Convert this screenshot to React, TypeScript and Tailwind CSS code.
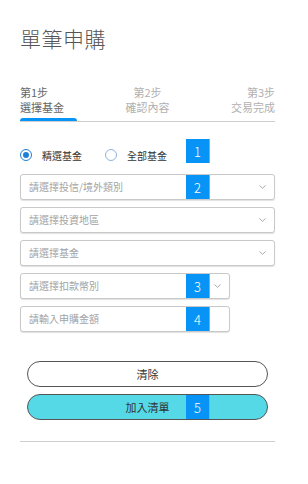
const FONT = { fontFamily: '"Noto Sans CJK TC", "Noto Sans", sans-serif' };

const STEPS = [
  { no: '第1步', label: '選擇基金', active: true, align: 'text-left' },
  { no: '第2步', label: '確認內容', active: false, align: 'text-center' },
  { no: '第3步', label: '交易完成', active: false, align: 'text-right' },
];

function Badge({ n, className }: { n: number; className: string }) {
  return (
    <span
      className={`absolute w-6 h-6 flex items-center justify-center bg-[#0893f7] border-r border-[#5db8fb] text-white text-[13px] leading-none font-light ${className}`}
    >
      {n}
    </span>
  );
}

function Chevron() {
  return (
    <svg width="7" height="4" viewBox="0 0 7 4" fill="none">
      <path d="M0.5 0.5 L3.5 3.3 L6.5 0.5" stroke="#a0a0a0" strokeWidth="0.9" />
    </svg>
  );
}

function Field({
  text,
  badge,
  short,
  select = true,
}: {
  text: string;
  badge?: number;
  short?: boolean;
  select?: boolean;
}) {
  return (
    <div
      className={`relative h-[26px] flex items-center justify-between pl-2 pr-[8px] border border-[#c9c9c9] rounded-[3px] bg-white shadow-[0_1px_1px_rgba(0,0,0,0.12)] ${
        short ? 'w-[210px]' : 'w-full'
      }`}
    >
      <span className="text-[10px] text-[#a3a3a3] leading-none">{text}</span>
      {select && <Chevron />}
      {badge && <Badge n={badge} className="left-[165px] top-0" />}
    </div>
  );
}

export default function App() {
  return (
    <main style={FONT} className="min-h-[484px] w-[308px] bg-white pt-[28px]">
      <div className="ml-5 w-[255px]">
        <h1 className="text-[21px] leading-[21px] font-light text-[#555] tracking-[0.5px]">單筆申購</h1>

        {/* steps */}
        <div className="mt-[36px] border-b border-[#cfcfcf]">
          <div className="grid grid-cols-3 text-[11px] leading-[15px]">
            {STEPS.map((s) => (
              <div key={s.no} className={`${s.align} ${s.active ? 'text-[#666]' : 'text-[#b0b0b0]'}`}>
                <div>{s.no}</div>
                <div>{s.label}</div>
              </div>
            ))}
          </div>
          <div className="mt-[3px] h-[3px] w-[57px] rounded-t-full bg-[#0893f7]" />
        </div>

        {/* fund type */}
        <div className="relative mt-[21px] h-6 flex items-center text-[10px] text-[#333]">
          <span className="w-3 h-3 rounded-full border-[1.5px] border-[#1e7fd8] flex items-center justify-center">
            <span className="w-[6px] h-[6px] rounded-full bg-[#1e7fd8]" />
          </span>
          <span className="ml-[10px]">精選基金</span>
          <span className="ml-[23px] w-3 h-3 rounded-full border-[1.5px] border-[#8fb4db]" />
          <span className="ml-[10px]">全部基金</span>
          <Badge n={1} className="left-[166px] top-[-4px]" />
        </div>

        <div className="mt-[7px] flex flex-col gap-[7px]">
          <Field text="請選擇投信/境外類別" badge={2} />
          <Field text="請選擇投資地區" />
          <Field text="請選擇基金" />
          <Field text="請選擇扣款幣別" badge={3} short />
          <Field text="請輸入申購金額" badge={4} short select={false} />
        </div>

        <div className="mt-[29px] mx-[7px] flex flex-col gap-[7px] text-[11px] text-[#333]">
          <button className="h-[26px] rounded-full border border-[#555] bg-white leading-none">清除</button>
          <button className="relative h-[26px] rounded-full border border-[#555] bg-[#55d9e6] leading-none">
            加入清單
            <Badge n={5} className="left-[158px] top-0" />
          </button>
        </div>

        <div className="mt-[21px] h-px bg-[#cfcfcf]" />
      </div>
    </main>
  );
}
